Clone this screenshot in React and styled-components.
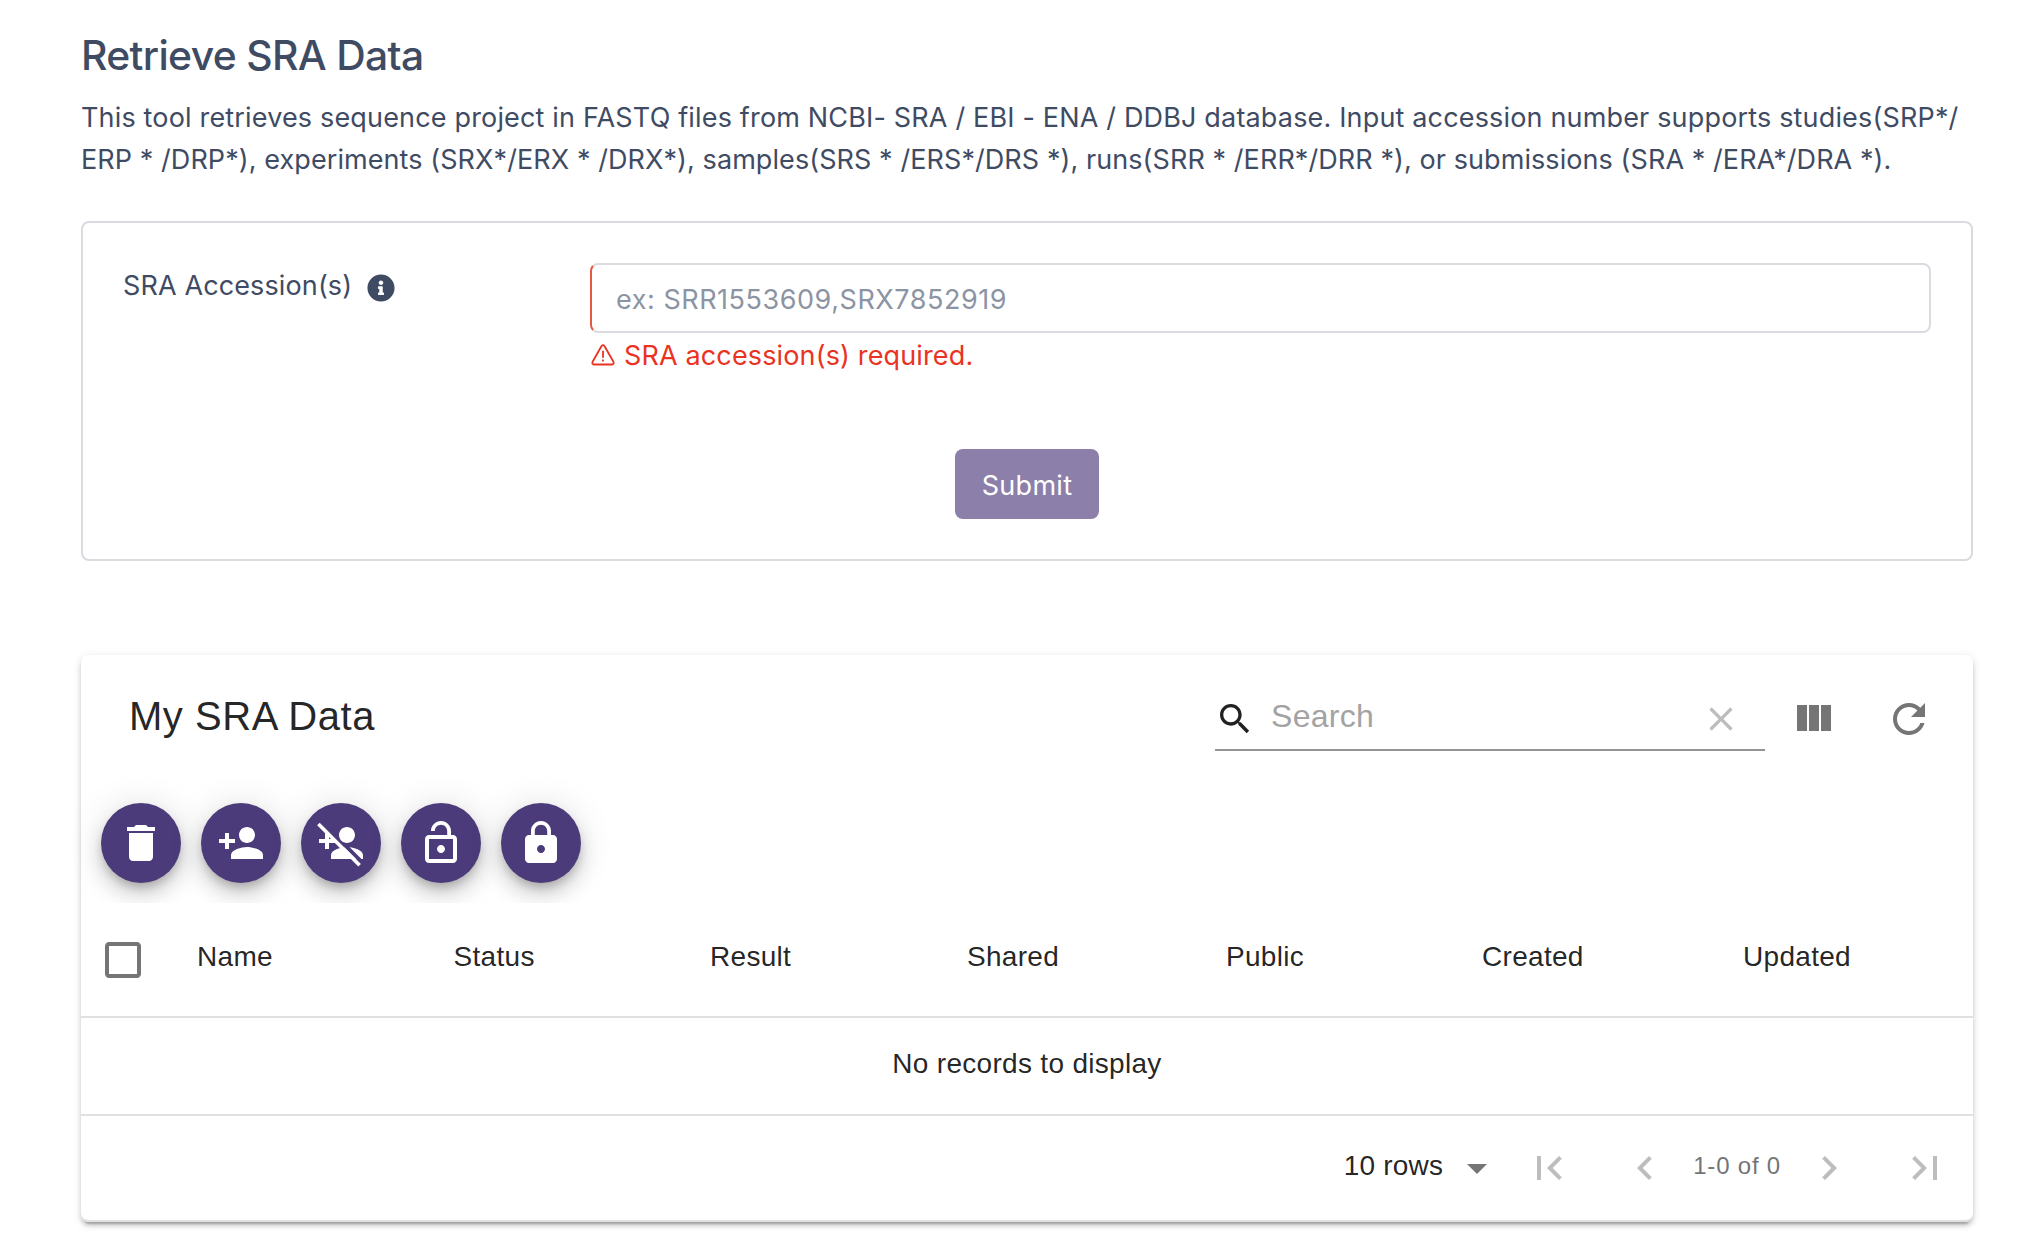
import React from "react";
import styled, { createGlobalStyle } from "styled-components";

const ui = '"Inter", "Liberation Sans", sans-serif';
const mui = '"Liberation Sans", Helvetica, Arial, sans-serif';

const Global = createGlobalStyle`
  * { box-sizing: border-box; }
  body { margin: 0; background: #fff; }
`;
const Page = styled.main`
  padding: 30px 49px 26px 81px;
  height: 1248px;
  overflow: hidden;
  font-family: ${ui};
  color: #3f4b63;
`;
const Heading = styled.h1`
  margin: 0;
  font-size: 40.8px;
  font-weight: 500;
  line-height: 50px;
  letter-spacing: -0.64px;
  white-space: nowrap;
`;
const Intro = styled.p`
  margin: 17px 0 0;
  font-size: 27px;
  line-height: 42px;
  white-space: nowrap;
`;
const Line = styled.span`
  display: block;
  letter-spacing: ${(p) => p.$track};
`;
const FormCard = styled.form`
  margin-top: 40px;
  height: 340px;
  border: 2px solid #dadbe0;
  border-radius: 8px;
  padding: 40px;
  display: flex;
  flex-direction: column;
  justify-content: space-between;
  align-items: center;
`;
const Field = styled.div`
  display: grid;
  grid-template-columns: 467px 1fr;
  width: 100%;
`;
const Label = styled.label`
  display: flex;
  align-items: center;
  gap: 15px;
  height: 44px;
  font-size: 27px;
  letter-spacing: 0.12px;
  svg { margin-top: 5px; }
`;
const Input = styled.input`
  display: block;
  width: 100%;
  height: 70px;
  padding: 2px 24px 0;
  border: 2px solid #dadbe0;
  border-left-color: #e05a44;
  border-radius: 8px;
  font: 27px ${ui};
  letter-spacing: 0.54px;
  outline: 0;
  &::placeholder { color: #8c94a3; opacity: 1; }
`;
const ErrorText = styled.div`
  display: flex;
  align-items: center;
  gap: 9px;
  height: 44px;
  padding-left: 1px;
  font-size: 27px;
  letter-spacing: 0.14px;
  color: #e93323;
`;
const Submit = styled.button`
  width: 144px;
  height: 70px;
  padding: 2px 0 0;
  border: 0;
  border-radius: 8px;
  background: #8c7fa9;
  color: #fff;
  font: 27px ${ui};
  letter-spacing: 0.3px;
`;
const TableCard = styled.section`
  margin-top: 94px;
  height: 567px;
  display: flex;
  flex-direction: column;
  border-radius: 8px;
  background: #fff;
  color: rgba(0, 0, 0, 0.87);
  font-family: ${mui};
  box-shadow: 0 6px 2px -4px rgba(0, 0, 0, 0.2), 0 4px 4px 0 rgba(0, 0, 0, 0.14), 0 2px 10px 0 rgba(0, 0, 0, 0.12);
`;
const Toolbar = styled.header`
  display: flex;
  align-items: center;
  height: 128px;
  padding: 0 16px 0 48px;
`;
const Title = styled.h2`
  margin: 0;
  padding-bottom: 5px;
  flex: 1;
  font-size: 40px;
  font-weight: 400;
  letter-spacing: 0.54px;
  white-space: nowrap;
`;
const SearchBox = styled.div`
  display: flex;
  align-items: center;
  width: 550px;
  height: 64px;
  padding-top: 2px;
  border-bottom: 2px solid #949494;
`;
const SearchInput = styled.input`
  flex: 1;
  min-width: 0;
  border: 0;
  padding: 0 0 5px;
  margin-left: 16px;
  background: none;
  outline: 0;
  font: 32px ${mui};
  letter-spacing: 0.3px;
  &::placeholder { color: #a3a3a3; opacity: 1; }
`;
const IconButton = styled.button`
  display: grid;
  place-items: center;
  width: ${(p) => p.$w || 96}px;
  height: ${(p) => p.$h || 96}px;
  padding: 0;
  border: 0;
  background: none;
  color: ${(p) => p.$color || "#757575"};
`;
const Actions = styled.div`
  display: flex;
  gap: 20px;
  height: 120px;
  padding: 20px;
`;
const Fab = styled.button`
  display: grid;
  place-items: center;
  width: 80px;
  height: 80px;
  padding: 0;
  border: 0;
  border-radius: 50%;
  background: #4c3b7a;
  color: #fff;
  box-shadow: 0 6px 10px -2px rgba(0, 0, 0, 0.2), 0 12px 20px 0 rgba(0, 0, 0, 0.14), 0 2px 36px 0 rgba(0, 0, 0, 0.12);
`;
const HeadRow = styled.div`
  display: grid;
  grid-template-columns: 84px 256.5px 256.5px 257px 259px 256px 261px 1fr;
  align-items: center;
  height: 115px;
  padding-bottom: 5px;
  background: #fff;
  border-bottom: 2px solid #e0e0e0;
  position: relative;
`;
const HeadCell = styled.div`
  padding-left: 32px;
  font-size: 28px;
  letter-spacing: 0.3px;
  line-height: 48px;
`;
const CheckCell = styled.div`
  padding: 5px 0 0 18px;
  display: flex;
`;
const EmptyRow = styled.div`
  height: 98px;
  display: flex;
  align-items: center;
  justify-content: center;
  padding-bottom: 4px;
  border-bottom: 2px solid #e0e0e0;
  font-size: 28px;
  letter-spacing: 0.3px;
`;
const Footer = styled.footer`
  flex: 1;
  display: flex;
  align-items: center;
  justify-content: flex-end;
  border-bottom: 2px solid #e0e0e0;
  border-radius: 0 0 8px 8px;
`;
const RowsSelect = styled.div`
  display: flex;
  align-items: center;
  gap: 10px;
  font-size: 28px;
  letter-spacing: 0.2px;
  padding-bottom: 5px;
  svg { margin-top: 5px; }
`;
const Range = styled.span`
  font-size: 24px;
  letter-spacing: 0.8px;
  color: #757575;
  white-space: nowrap;
  padding-bottom: 4px;
`;

const paths = {
  trash: "M6 19c0 1.1.9 2 2 2h8c1.1 0 2-.9 2-2V7H6v12zM19 4h-3.5l-1-1h-5l-1 1H5v2h14V4z",
  add: "M15 12c2.21 0 4-1.79 4-4s-1.79-4-4-4-4 1.79-4 4 1.79 4 4 4zm-9-2V7H4v3H1v2h3v3h2v-3h3v-2H6zm9 4c-2.67 0-8 1.34-8 4v2h16v-2c0-2.66-5.33-4-8-4z",
  open: "M12 17c1.1 0 2-.9 2-2s-.9-2-2-2-2 .9-2 2 .9 2 2 2zm6-9h-1V6c0-2.76-2.24-5-5-5S7 3.24 7 6h1.9c0-1.71 1.39-3.1 3.1-3.1 1.71 0 3.1 1.39 3.1 3.1v2H6c-1.1 0-2 .9-2 2v10c0 1.1.9 2 2 2h12c1.1 0 2-.9 2-2V10c0-1.1-.9-2-2-2zm0 12H6V10h12v10z",
  lock: "M18 8h-1V6c0-2.76-2.24-5-5-5S7 3.24 7 6v2H6c-1.1 0-2 .9-2 2v10c0 1.1.9 2 2 2h12c1.1 0 2-.9 2-2V10c0-1.1-.9-2-2-2zm-6 9c-1.1 0-2-.9-2-2s.9-2 2-2 2 .9 2 2-.9 2-2 2zm3.1-9H8.9V6c0-1.71 1.39-3.1 3.1-3.1 1.71 0 3.1 1.39 3.1 3.1v2z",
  search: "M15.5 14h-.79l-.28-.27C15.41 12.59 16 11.11 16 9.5 16 5.91 13.09 3 9.5 3S3 5.91 3 9.5 5.91 16 9.5 16c1.61 0 3.09-.59 4.23-1.57l.27.28v.79l5 4.99L20.49 19l-4.99-5zm-6 0C7.01 14 5 11.99 5 9.5S7.01 5 9.5 5 14 7.01 14 9.5 11.99 14 9.5 14z",
  clear: "M19 6.41L17.59 5 12 10.59 6.41 5 5 6.41 10.59 12 5 17.59 6.41 19 12 13.41 17.59 19 19 17.59 13.41 12z",
  columns: "M10 18h5V5h-5v13zm-6 0h5V5H4v13zM16 5v13h5V5h-5z",
  refresh: "M17.65 6.35C16.2 4.9 14.21 4 12 4c-4.42 0-7.99 3.58-7.99 8s3.57 8 7.99 8c3.73 0 6.84-2.55 7.73-6h-2.08c-.82 2.33-3.04 4-5.65 4-3.31 0-6-2.69-6-6s2.69-6 6-6c1.66 0 3.14.69 4.22 1.78L13 11h7V4l-2.35 2.35z",
  box: "M19 5v14H5V5h14m0-2H5c-1.1 0-2 .9-2 2v14c0 1.1.9 2 2 2h14c1.1 0 2-.9 2-2V5c0-1.1-.9-2-2-2z",
  arrow: "M7 10l5 5 5-5z",
  first: "M18.41 16.59L13.82 12l4.59-4.59L17 6l-6 6 6 6zM6 6h2v12H6z",
  prev: "M15.41 7.41L14 6l-6 6 6 6 1.41-1.41L10.83 12z",
  next: "M10 6L8.59 7.41 13.17 12l-4.58 4.59L10 18l6-6z",
  last: "M5.59 7.41L10.18 12l-4.59 4.59L7 18l6-6-6-6zM16 6h2v12h-2z",
};
const Glyph = ({ name, size = 48, color = "currentColor" }) => (
  <svg width={size} height={size} viewBox="0 0 24 24" fill={color}>
    <path d={paths[name]} />
  </svg>
);
const AddDisabled = () => (
  <svg width="48" height="48" viewBox="0 0 24 24" fill="#fff">
    <path d={paths.add} />
    <path d="M14.2 13.3L23.4 22.5" stroke="#4c3b7a" strokeWidth="1.9" />
    <path d="M.7 2.5L21.3 23.1" stroke="#fff" strokeWidth="1.8" />
  </svg>
);
const Info = () => (
  <svg width="28" height="28" viewBox="0 0 512 512" fill="#3f4b63">
    <path d="M256 8C119.043 8 8 119.083 8 256c0 136.997 111.043 248 248 248s248-111.003 248-248C504 119.083 392.957 8 256 8zm0 110c23.196 0 42 18.804 42 42s-18.804 42-42 42-42-18.804-42-42 18.804-42 42-42zm56 254c0 6.627-5.373 12-12 12h-88c-6.627 0-12-5.373-12-12v-24c0-6.627 5.373-12 12-12h12v-64h-12c-6.627 0-12-5.373-12-12v-24c0-6.627 5.373-12 12-12h64c6.627 0 12 5.373 12 12v100h12c6.627 0 12 5.373 12 12v24z" />
  </svg>
);
const Warning = () => (
  <svg width="24" height="24" viewBox="0 0 24 24" fill="none" stroke="#e93323" strokeWidth="1.8" strokeLinejoin="round">
    <path d="M10.4 3.2L1.6 18.7Q.6 21.3 3 21.5H21Q23.4 21.3 22.4 18.7L13.6 3.2Q12 1.2 10.4 3.2Z" />
    <path d="M12 7.8v7M12 16.4v2" />
  </svg>
);

const columns = ["Name", "Status", "Result", "Shared", "Public", "Created", "Updated"];

export default function App() {
  return (
    <Page>
      <Global />
      <Heading>Retrieve SRA Data</Heading>
      <Intro>
        <Line $track="0.165px">This tool retrieves sequence project in FASTQ files from NCBI- SRA / EBI - ENA / DDBJ database. Input accession number supports studies(SRP*/</Line>
        <Line $track="0.08px">ERP * /DRP*), experiments (SRX*/ERX * /DRX*), samples(SRS * /ERS*/DRS *), runs(SRR * /ERR*/DRR *), or submissions (SRA * /ERA*/DRA *).</Line>
      </Intro>
      <FormCard>
        <Field>
          <Label>SRA Accession(s) <Info /></Label>
          <div>
            <Input placeholder="ex: SRR1553609,SRX7852919" />
            <ErrorText><Warning />SRA accession(s) required.</ErrorText>
          </div>
        </Field>
        <Submit type="button">Submit</Submit>
      </FormCard>
      <TableCard>
        <Toolbar>
          <Title>My SRA Data</Title>
          <SearchBox>
            <Glyph name="search" size={40} />
            <SearchInput placeholder="Search" />
            <IconButton $color="#bdbdbd" $w={88} $h={60}><Glyph name="clear" size={40} /></IconButton>
          </SearchBox>
          <IconButton><Glyph name="columns" /></IconButton>
          <IconButton><Glyph name="refresh" /></IconButton>
        </Toolbar>
        <Actions>
          <Fab><Glyph name="trash" /></Fab>
          <Fab><Glyph name="add" /></Fab>
          <Fab><AddDisabled /></Fab>
          <Fab><Glyph name="open" /></Fab>
          <Fab><Glyph name="lock" /></Fab>
        </Actions>
        <HeadRow>
          <CheckCell><Glyph name="box" color="#757575" /></CheckCell>
          {columns.map((c) => <HeadCell key={c}>{c}</HeadCell>)}
        </HeadRow>
        <EmptyRow>No records to display</EmptyRow>
        <Footer>
          <RowsSelect>10 rows <Glyph name="arrow" color="#757575" /></RowsSelect>
          <IconButton $color="#bdbdbd"><Glyph name="first" /></IconButton>
          <IconButton $color="#bdbdbd"><Glyph name="prev" /></IconButton>
          <Range>1-0 of 0</Range>
          <IconButton $color="#bdbdbd"><Glyph name="next" /></IconButton>
          <IconButton $color="#bdbdbd"><Glyph name="last" /></IconButton>
        </Footer>
      </TableCard>
    </Page>
  );
}
